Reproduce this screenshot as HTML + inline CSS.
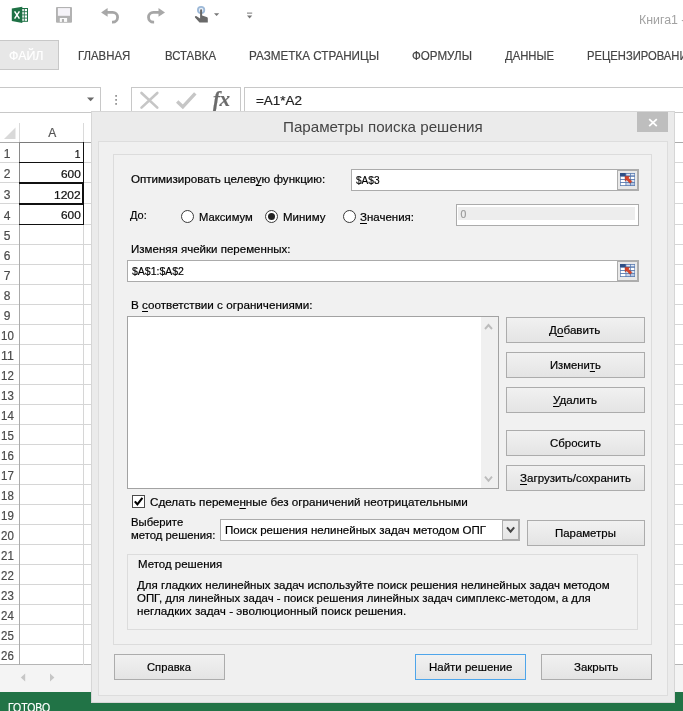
<!DOCTYPE html>
<html lang="ru"><head><meta charset="utf-8"><title>Параметры поиска решения</title>
<style>
html,body{margin:0;padding:0;}
body{width:683px;height:711px;overflow:hidden;position:relative;background:#fff;font-family:"Liberation Sans",sans-serif;}
.t{-webkit-text-stroke:0.2px currentColor;position:absolute;transform-origin:0 0;white-space:nowrap;line-height:1.149;font-family:"Liberation Sans",sans-serif;}
.t u{text-decoration:underline;text-underline-offset:1.5px;}
.a{position:absolute;box-sizing:border-box;}
.btn{position:absolute;box-sizing:border-box;border:1px solid #acacac;background:linear-gradient(#f0f0f0,#e5e5e5);}
.inp{position:absolute;box-sizing:border-box;border:1px solid #ababab;background:#fff;}
.radio{position:absolute;box-sizing:border-box;width:13px;height:13px;border:1px solid #333;border-radius:50%;background:#fff;}
#txt{position:absolute;left:0;top:0;width:683px;height:711px;will-change:transform;}

</style></head><body>
<!-- title bar / quick access toolbar -->
<svg class="a" style="left:0;top:0" width="683" height="40" viewBox="0 0 683 40">
<!-- excel logo -->
<rect x="21" y="8.5" width="6.5" height="12.8" fill="#fff" stroke="#1e7145" stroke-width="1"/>
<path d="M21 11.7h6.5M21 14.9h6.5M21 18.1h6.5M24.3 8.5v12.8" stroke="#1e7145" stroke-width="0.9" fill="none"/>
<path d="M11.8 8.6 L22.3 6.8 V22.9 L11.8 21.1 Z" fill="#1e7145"/>
<path d="M14.6 11.4 L19.4 18.6 M19.4 11.4 L14.6 18.6" stroke="#fff" stroke-width="1.5" fill="none"/>
<!-- save -->
<path d="M56 8 a1 1 0 0 1 1-1 H71 a1 1 0 0 1 1 1 V21.8 a1 1 0 0 1-1 1 H57 a1 1 0 0 1-1-1 Z" fill="#b2b2b2"/>
<rect x="57.9" y="8.1" width="12.1" height="7.7" fill="#f5f3f8"/>
<rect x="59.8" y="18" width="7.3" height="3.9" fill="#fafafa"/>
<rect x="61.9" y="19" width="2.1" height="3" fill="#b2b2b2"/>
<!-- undo -->
<path d="M101.1 12.4 L107.6 8 V16.8 Z" fill="#a8a8a8"/>
<path d="M106 12.4 H112.7 A4.9 4.9 0 0 1 112.7 22.2 H112" stroke="#a6a6a6" stroke-width="2.8" fill="none"/>
<!-- redo -->
<path d="M165 12.4 L158.5 8 V16.8 Z" fill="#a8a8a8"/>
<path d="M160 12.4 H153.4 A4.9 4.9 0 0 0 153.4 22.2 H154.1" stroke="#a6a6a6" stroke-width="2.8" fill="none"/>
<!-- touch mode -->
<circle cx="201.1" cy="10" r="3.2" fill="#e6eef7" stroke="#9db9d8" stroke-width="1.8"/>
<path d="M200.1 10.2 a1 1 0 0 1 2 0 V15.6 L206.6 17 a1.4 1.4 0 0 1 1.2 1.5 V22.6 H199.5 L195 17.6 a1.1 1.1 0 0 1 1.6-1.4 L200.1 18.4 Z" fill="#696969"/>
<path d="M214 13.3 h5.2 l-2.6 2.7 Z" fill="#777"/>
<!-- customize -->
<rect x="247" y="12.6" width="5.2" height="1" fill="#777"/>
<path d="M247 15.5 h5.2 l-2.6 3 Z" fill="#777"/>
</svg>
<!-- ribbon tabs -->
<div class="a" style="left:0px;top:40px;width:59px;height:30px;background:#e7e7e7;border:1px solid #c8c8c8;border-left:0"></div>
<!-- formula bar -->
<div class="a" style="left:0px;top:87px;width:101px;height:1px;background:#c8c8c8"></div>
<div class="a" style="left:131px;top:87px;width:110px;height:1px;background:#c8c8c8"></div>
<div class="a" style="left:244px;top:87px;width:439px;height:1px;background:#c8c8c8"></div>
<div class="a" style="left:0px;top:112px;width:92px;height:1px;background:#c8c8c8"></div>
<div class="a" style="left:675px;top:112px;width:8px;height:1px;background:#c8c8c8"></div>
<div class="a" style="left:100px;top:87px;width:1px;height:25px;background:#c8c8c8"></div>
<div class="a" style="left:131px;top:87px;width:1px;height:25px;background:#c8c8c8"></div>
<div class="a" style="left:240px;top:87px;width:1px;height:25px;background:#c8c8c8"></div>
<div class="a" style="left:244px;top:87px;width:1px;height:25px;background:#c8c8c8"></div>
<svg class="a" style="left:80px;top:88px" width="170" height="24" viewBox="80 88 170 24">
<path d="M87 97.5 h7.2 l-3.6 3.8 Z" fill="#6a6a6a"/>
<rect x="115.3" y="95" width="1.6" height="1.8" fill="#8c8c8c"/><rect x="115.3" y="99" width="1.6" height="1.8" fill="#8c8c8c"/><rect x="115.3" y="103" width="1.6" height="1.8" fill="#8c8c8c"/>
<path d="M141.5 93 L157.3 107.6 M157.3 93 L141.5 107.6" stroke="#c6c6c6" stroke-width="2.6" stroke-linecap="round" fill="none"/>
<path d="M177.2 101.5 L182.8 106.8 L195.3 93.4" stroke="#c6c6c6" stroke-width="3.4" fill="none"/>
</svg>
<span class="t" style="left:213px;top:87px;font-family:'Liberation Serif',serif;font-style:italic;font-weight:bold;font-size:21px;color:#6b6b6b;letter-spacing:-0.5px;will-change:transform">fx</span>
<!-- sheet -->
<div class="a" style="left:0px;top:113px;width:683px;height:29px;background:#fff"></div>
<svg class="a" style="left:0;top:113px" width="92" height="30" viewBox="0 113 92 30"><path d="M15.5 127.5 V139 H4 Z" fill="#d9d9d9"/></svg>
<div class="a" style="left:19px;top:122.5px;width:1px;height:19.5px;background:#dadada"></div>
<div class="a" style="left:83px;top:122.5px;width:1px;height:19.5px;background:#dadada"></div>
<div class="a" style="left:0px;top:142px;width:683px;height:1px;background:#ababab"></div>
<div class="a" style="left:0px;top:162px;width:683px;height:1px;background:#d6d6d6"></div>
<div class="a" style="left:0px;top:182px;width:683px;height:1px;background:#d6d6d6"></div>
<div class="a" style="left:0px;top:203px;width:683px;height:1px;background:#d6d6d6"></div>
<div class="a" style="left:0px;top:224px;width:683px;height:1px;background:#d6d6d6"></div>
<div class="a" style="left:0px;top:244px;width:683px;height:1px;background:#d6d6d6"></div>
<div class="a" style="left:0px;top:264px;width:683px;height:1px;background:#d6d6d6"></div>
<div class="a" style="left:0px;top:284px;width:683px;height:1px;background:#d6d6d6"></div>
<div class="a" style="left:0px;top:304px;width:683px;height:1px;background:#d6d6d6"></div>
<div class="a" style="left:0px;top:324px;width:683px;height:1px;background:#d6d6d6"></div>
<div class="a" style="left:0px;top:344px;width:683px;height:1px;background:#d6d6d6"></div>
<div class="a" style="left:0px;top:364px;width:683px;height:1px;background:#d6d6d6"></div>
<div class="a" style="left:0px;top:384px;width:683px;height:1px;background:#d6d6d6"></div>
<div class="a" style="left:0px;top:404px;width:683px;height:1px;background:#d6d6d6"></div>
<div class="a" style="left:0px;top:424px;width:683px;height:1px;background:#d6d6d6"></div>
<div class="a" style="left:0px;top:444px;width:683px;height:1px;background:#d6d6d6"></div>
<div class="a" style="left:0px;top:464px;width:683px;height:1px;background:#d6d6d6"></div>
<div class="a" style="left:0px;top:484px;width:683px;height:1px;background:#d6d6d6"></div>
<div class="a" style="left:0px;top:504px;width:683px;height:1px;background:#d6d6d6"></div>
<div class="a" style="left:0px;top:524px;width:683px;height:1px;background:#d6d6d6"></div>
<div class="a" style="left:0px;top:544px;width:683px;height:1px;background:#d6d6d6"></div>
<div class="a" style="left:0px;top:564px;width:683px;height:1px;background:#d6d6d6"></div>
<div class="a" style="left:0px;top:584px;width:683px;height:1px;background:#d6d6d6"></div>
<div class="a" style="left:0px;top:604px;width:683px;height:1px;background:#d6d6d6"></div>
<div class="a" style="left:0px;top:624px;width:683px;height:1px;background:#d6d6d6"></div>
<div class="a" style="left:0px;top:644px;width:683px;height:1px;background:#d6d6d6"></div>
<div class="a" style="left:0px;top:664px;width:683px;height:1px;background:#b5b5b5"></div>
<div class="a" style="left:19px;top:142px;width:1px;height:523px;background:#ababab"></div>
<div class="a" style="left:83px;top:142px;width:1px;height:523px;background:#d6d6d6"></div>
<div class="a" style="left:19px;top:142px;width:65px;height:1px;background:#7a7a7a"></div>
<div class="a" style="left:19px;top:142px;width:1px;height:82px;background:#8a8a8a"></div>
<div class="a" style="left:83px;top:142px;width:1.4px;height:82px;background:#111"></div>
<div class="a" style="left:19px;top:162px;width:65px;height:1px;background:#111"></div>
<div class="a" style="left:19px;top:224px;width:65px;height:1px;background:#111"></div>
<div class="a" style="left:19px;top:182px;width:65px;height:2px;background:#111"></div>
<div class="a" style="left:19px;top:203px;width:65px;height:2px;background:#111"></div>
<div class="a" style="left:82.2px;top:182px;width:2.2px;height:23px;background:#111"></div>
<div class="a" style="left:0px;top:665px;width:683px;height:27px;background:#f4f4f4"></div>
<svg class="a" style="left:0;top:665px" width="92" height="27" viewBox="0 665 92 27"><path d="M25.2 673.6 V681.4 L20.8 677.5 Z" fill="#c6c6c6"/><path d="M50 673.6 V681.4 L54.4 677.5 Z" fill="#c6c6c6"/></svg>
<!-- status bar -->
<div class="a" style="left:0px;top:692px;width:683px;height:19px;background:#217346"></div>
<!-- dialog -->
<div class="a" style="left:91px;top:111px;width:584px;height:592px;background:#ebebeb;border:1px solid #d6d6d6"></div>
<div class="a" style="left:98px;top:141px;width:570px;height:555px;background:#f0f0f0;border:1px solid #dddddd"></div>
<div class="a" style="left:637px;top:112px;width:31px;height:20px;background:#bebebe"></div>
<svg class="a" style="left:637px;top:112px" width="31" height="20" viewBox="0 0 31 20"><path d="M12.2 7.1 L19.8 14.1 M19.8 7.1 L12.2 14.1" stroke="#fff" stroke-width="1.8" fill="none"/></svg>
<div class="a" style="left:113px;top:154px;width:539px;height:491px;border:1px solid #dcdcdc;background:#f1f1f1"></div>
<!-- inputs -->
<div class="a" style="left:351px;top:169px;width:288px;height:22px;border:1px solid #ababab;background:#fff"></div>
<div class="a" style="left:617px;top:169px;width:22px;height:22px;border:2px solid #adadad;border-left-width:1px;background:#e9e9e9"></div>
<svg class="a" style="left:620px;top:173px" width="15" height="13" viewBox="0 0 15 13">
<rect x="0" y="0" width="15" height="13" fill="#5a7bb0"/>
<rect x="0" y="0" width="5.5" height="3" fill="#2f4f86"/>
<rect x="6.3" y="0.8" width="3.7" height="1.6" fill="#dfe8f5"/><rect x="10.8" y="0.8" width="3.6" height="1.6" fill="#dfe8f5"/>
<rect x="0.7" y="3.8" width="4.8" height="2.2" fill="#fff"/><rect x="6.3" y="3.8" width="3.7" height="2.2" fill="#fff"/><rect x="10.8" y="3.8" width="3.6" height="2.2" fill="#fff"/>
<rect x="0.7" y="6.9" width="4.8" height="2.2" fill="#fff"/><rect x="6.3" y="6.9" width="3.7" height="2.2" fill="#eef3fa"/><rect x="10.8" y="6.9" width="3.6" height="2.2" fill="#dce6f4"/>
<rect x="0.7" y="10" width="4.8" height="2.2" fill="#fff"/><rect x="6.3" y="10" width="3.7" height="2.2" fill="#c8d6ec"/><rect x="10.8" y="10" width="3.6" height="2.2" fill="#b4c7e4"/>
<path d="M5 3.2 L9.6 3.6 L8.4 4.9 L11.9 8.4 L10 10.3 L6.6 6.8 L5.3 8 Z" fill="#d8432a" stroke="#a52a14" stroke-width="0.5"/>
</svg>
<div class="a" style="left:456px;top:204px;width:183px;height:22px;border:1px solid #ababab;background:#fff"></div>
<div class="a" style="left:458px;top:207px;width:177px;height:12.5px;background:#ededed"></div>
<div class="a" style="left:127px;top:260px;width:512px;height:22px;border:1px solid #ababab;background:#fff"></div>
<div class="a" style="left:617px;top:260px;width:22px;height:22px;border:2px solid #adadad;border-left-width:1px;background:#e9e9e9"></div>
<svg class="a" style="left:620px;top:264px" width="15" height="13" viewBox="0 0 15 13">
<rect x="0" y="0" width="15" height="13" fill="#5a7bb0"/>
<rect x="0" y="0" width="5.5" height="3" fill="#2f4f86"/>
<rect x="6.3" y="0.8" width="3.7" height="1.6" fill="#dfe8f5"/><rect x="10.8" y="0.8" width="3.6" height="1.6" fill="#dfe8f5"/>
<rect x="0.7" y="3.8" width="4.8" height="2.2" fill="#fff"/><rect x="6.3" y="3.8" width="3.7" height="2.2" fill="#fff"/><rect x="10.8" y="3.8" width="3.6" height="2.2" fill="#fff"/>
<rect x="0.7" y="6.9" width="4.8" height="2.2" fill="#fff"/><rect x="6.3" y="6.9" width="3.7" height="2.2" fill="#eef3fa"/><rect x="10.8" y="6.9" width="3.6" height="2.2" fill="#dce6f4"/>
<rect x="0.7" y="10" width="4.8" height="2.2" fill="#fff"/><rect x="6.3" y="10" width="3.7" height="2.2" fill="#c8d6ec"/><rect x="10.8" y="10" width="3.6" height="2.2" fill="#b4c7e4"/>
<path d="M5 3.2 L9.6 3.6 L8.4 4.9 L11.9 8.4 L10 10.3 L6.6 6.8 L5.3 8 Z" fill="#d8432a" stroke="#a52a14" stroke-width="0.5"/>
</svg>
<div class="a" style="left:127px;top:316px;width:372px;height:173px;border:1px solid #a2a2a2;background:#fff"></div>
<div class="a" style="left:481px;top:317px;width:17px;height:171px;background:#f0f0f0"></div>
<svg class="a" style="left:481px;top:317px" width="17" height="171" viewBox="0 0 17 171"><path d="M4 12 L7.5 8 L11 12" stroke="#bcbcbc" stroke-width="1.9" fill="none"/><path d="M4 159.6 L7.5 163.8 L11 159.6" stroke="#bcbcbc" stroke-width="1.9" fill="none"/></svg>
<!-- radios -->
<div class="a" style="left:180.8px;top:210px;width:13px;height:13px;border:1px solid #3a3a3a;border-radius:50%;background:#fff"></div>
<div class="a" style="left:265px;top:210px;width:13px;height:13px;border:1px solid #3a3a3a;border-radius:50%;background:#fff"></div>
<div class="a" style="left:342.8px;top:210px;width:13px;height:13px;border:1px solid #3a3a3a;border-radius:50%;background:#fff"></div>
<div class="a" style="left:268px;top:213px;width:7px;height:7px;border-radius:50%;background:#222"></div>
<!-- buttons -->
<div class="a" style="left:506px;top:317px;width:139px;height:26px;border:1px solid #acacac;background:linear-gradient(#f1f1f1,#e4e4e4);"></div>
<div class="a" style="left:506px;top:352px;width:139px;height:26px;border:1px solid #acacac;background:linear-gradient(#f1f1f1,#e4e4e4);"></div>
<div class="a" style="left:506px;top:387px;width:139px;height:26px;border:1px solid #acacac;background:linear-gradient(#f1f1f1,#e4e4e4);"></div>
<div class="a" style="left:506px;top:430px;width:139px;height:26px;border:1px solid #acacac;background:linear-gradient(#f1f1f1,#e4e4e4);"></div>
<div class="a" style="left:506px;top:465px;width:139px;height:26px;border:1px solid #acacac;background:linear-gradient(#f1f1f1,#e4e4e4);"></div>
<div class="a" style="left:527px;top:520px;width:118px;height:26px;border:1px solid #acacac;background:linear-gradient(#f1f1f1,#e4e4e4);"></div>
<div class="a" style="left:114px;top:654px;width:111px;height:26px;border:1px solid #acacac;background:linear-gradient(#f1f1f1,#e4e4e4);"></div>
<div class="a" style="left:415px;top:654px;width:111px;height:26px;border:1px solid #acacac;background:linear-gradient(#f1f1f1,#e4e4e4);border-color:#4ea5ea"></div>
<div class="a" style="left:541px;top:654px;width:111px;height:26px;border:1px solid #acacac;background:linear-gradient(#f1f1f1,#e4e4e4);"></div>
<!-- checkbox -->
<div class="a" style="left:132px;top:495px;width:13px;height:13px;border:1px solid #4a4a4a;background:#fff"></div>
<svg class="a" style="left:132px;top:495px" width="13" height="13" viewBox="0 0 13 13"><path d="M2.8 6.4 L5.4 9.3 L10.4 2.9" stroke="#000" stroke-width="2.1" fill="none"/></svg>
<!-- select -->
<div class="a" style="left:220px;top:519px;width:300px;height:22px;border:1px solid #ababab;background:#fff"></div>
<div class="a" style="left:502px;top:519px;width:18px;height:22px;border:2px solid #adadad;border-left-width:1px;background:linear-gradient(#eeeeee,#e6e6e6)"></div>
<svg class="a" style="left:502px;top:519px" width="18" height="22" viewBox="0 0 18 22"><path d="M5 8.3 L8.6 12.6 L12.2 8.3" stroke="#444" stroke-width="2" fill="none"/></svg>
<!-- group -->
<div class="a" style="left:127px;top:554px;width:511px;height:76px;border:1px solid #dcdcdc"></div>
<div id="txt">
<span class="t" style="left:9px;top:49.00px;font-size:12.5px;color:#fff;transform:scaleX(0.9924);">ФАЙЛ</span>
<span class="t" style="left:78.3px;top:49.00px;font-size:12.5px;color:#444;transform:scaleX(0.9103);">ГЛАВНАЯ</span>
<span class="t" style="left:164.7px;top:49.00px;font-size:12.5px;color:#444;transform:scaleX(0.9097);">ВСТАВКА</span>
<span class="t" style="left:249px;top:49.00px;font-size:12.5px;color:#444;transform:scaleX(0.9343);">РАЗМЕТКА СТРАНИЦЫ</span>
<span class="t" style="left:412px;top:49.00px;font-size:12.5px;color:#444;transform:scaleX(0.9282);">ФОРМУЛЫ</span>
<span class="t" style="left:505px;top:49.00px;font-size:12.5px;color:#444;transform:scaleX(0.9030);">ДАННЫЕ</span>
<span class="t" style="left:587px;top:49.00px;font-size:12.5px;color:#444;transform:scaleX(0.8984);">РЕЦЕНЗИРОВАНИЕ</span>
<span class="t" style="left:638.5px;top:13.00px;font-size:12.5px;color:#a2a2a2;transform:scaleX(0.9894);-webkit-text-stroke:0;">Книга1 -</span>
<span class="t" style="left:256px;top:94.00px;font-size:13px;color:#222;transform:scaleX(1.0348);">=A1*A2</span>
<span class="t" style="left:48.3px;top:127.00px;font-size:12px;color:#555;transform:scaleX(1.0000);">A</span>
<span class="t" style="left:3.8499999999999996px;top:148.00px;font-size:12px;color:#4a4a4a;transform:scaleX(1.0000);">1</span>
<span class="t" style="left:3.8499999999999996px;top:168.00px;font-size:12px;color:#4a4a4a;transform:scaleX(1.0000);">2</span>
<span class="t" style="left:3.8499999999999996px;top:189.00px;font-size:12px;color:#4a4a4a;transform:scaleX(1.0000);">3</span>
<span class="t" style="left:3.8499999999999996px;top:210.00px;font-size:12px;color:#4a4a4a;transform:scaleX(1.0000);">4</span>
<span class="t" style="left:3.8499999999999996px;top:230.00px;font-size:12px;color:#4a4a4a;transform:scaleX(1.0000);">5</span>
<span class="t" style="left:3.8499999999999996px;top:250.00px;font-size:12px;color:#4a4a4a;transform:scaleX(1.0000);">6</span>
<span class="t" style="left:3.8499999999999996px;top:270.00px;font-size:12px;color:#4a4a4a;transform:scaleX(1.0000);">7</span>
<span class="t" style="left:3.8499999999999996px;top:290.00px;font-size:12px;color:#4a4a4a;transform:scaleX(1.0000);">8</span>
<span class="t" style="left:3.8499999999999996px;top:310.00px;font-size:12px;color:#4a4a4a;transform:scaleX(1.0000);">9</span>
<span class="t" style="left:0.8999999999999995px;top:330.00px;font-size:12px;color:#4a4a4a;transform:scaleX(0.9581);">10</span>
<span class="t" style="left:0.8999999999999995px;top:350.00px;font-size:12px;color:#4a4a4a;transform:scaleX(1.0266);">11</span>
<span class="t" style="left:0.8999999999999995px;top:370.00px;font-size:12px;color:#4a4a4a;transform:scaleX(0.9581);">12</span>
<span class="t" style="left:0.8999999999999995px;top:390.00px;font-size:12px;color:#4a4a4a;transform:scaleX(0.9581);">13</span>
<span class="t" style="left:0.8999999999999995px;top:410.00px;font-size:12px;color:#4a4a4a;transform:scaleX(0.9581);">14</span>
<span class="t" style="left:0.8999999999999995px;top:430.00px;font-size:12px;color:#4a4a4a;transform:scaleX(0.9581);">15</span>
<span class="t" style="left:0.8999999999999995px;top:450.00px;font-size:12px;color:#4a4a4a;transform:scaleX(0.9581);">16</span>
<span class="t" style="left:0.8999999999999995px;top:470.00px;font-size:12px;color:#4a4a4a;transform:scaleX(0.9581);">17</span>
<span class="t" style="left:0.8999999999999995px;top:490.00px;font-size:12px;color:#4a4a4a;transform:scaleX(0.9581);">18</span>
<span class="t" style="left:0.8999999999999995px;top:510.00px;font-size:12px;color:#4a4a4a;transform:scaleX(0.9581);">19</span>
<span class="t" style="left:0.8999999999999995px;top:530.00px;font-size:12px;color:#4a4a4a;transform:scaleX(0.9581);">20</span>
<span class="t" style="left:0.8999999999999995px;top:550.00px;font-size:12px;color:#4a4a4a;transform:scaleX(0.9581);">21</span>
<span class="t" style="left:0.8999999999999995px;top:570.00px;font-size:12px;color:#4a4a4a;transform:scaleX(0.9581);">22</span>
<span class="t" style="left:0.8999999999999995px;top:590.00px;font-size:12px;color:#4a4a4a;transform:scaleX(0.9581);">23</span>
<span class="t" style="left:0.8999999999999995px;top:610.00px;font-size:12px;color:#4a4a4a;transform:scaleX(0.9581);">24</span>
<span class="t" style="left:0.8999999999999995px;top:630.00px;font-size:12px;color:#4a4a4a;transform:scaleX(0.9581);">25</span>
<span class="t" style="left:0.8999999999999995px;top:650.00px;font-size:12px;color:#4a4a4a;transform:scaleX(0.9581);">26</span>
<span class="t" style="left:74.8px;top:149.00px;font-size:10.3px;color:#111;transform:scaleX(1.0000);">1</span>
<span class="t" style="left:60.6px;top:169.00px;font-size:10.3px;color:#111;transform:scaleX(1.1520);">600</span>
<span class="t" style="left:53.7px;top:190.00px;font-size:10.3px;color:#111;transform:scaleX(1.1648);">1202</span>
<span class="t" style="left:60.6px;top:210.00px;font-size:10.3px;color:#111;transform:scaleX(1.1520);">600</span>
<span class="t" style="left:7.9px;top:701.00px;font-size:12.5px;color:#fff;transform:scaleX(0.8381);">ГОТОВО</span>
<span class="t" style="left:283px;top:118.00px;font-size:15px;color:#444;transform:scaleX(1.0100);-webkit-text-stroke:0;">Параметры поиска решения</span>
<span class="t" style="left:130.5px;top:173.00px;font-size:11.5px;color:#000;transform:scaleX(1.0084);">Оптимизировать целев<u>у</u>ю функцию:</span>
<span class="t" style="left:355.8px;top:174.00px;font-size:11.5px;color:#000;transform:scaleX(0.8787);">$A$3</span>
<span class="t" style="left:130.3px;top:209.00px;font-size:11.5px;color:#000;transform:scaleX(0.9534);">До:</span>
<span class="t" style="left:198.8px;top:211.00px;font-size:11.5px;color:#000;transform:scaleX(0.9761);">Максимум</span>
<span class="t" style="left:282.9px;top:211.00px;font-size:11.5px;color:#000;transform:scaleX(0.9982);">Миниму</span>
<span class="t" style="left:360.3px;top:211.00px;font-size:11.5px;color:#000;transform:scaleX(0.9994);"><u>З</u>начения:</span>
<span class="t" style="left:460.5px;top:208.00px;font-size:10.5px;color:#9a9a9a;transform:scaleX(1.0000);">0</span>
<span class="t" style="left:130.5px;top:243.00px;font-size:11.5px;color:#000;transform:scaleX(1.0021);">Изменяя ячейки переменных:</span>
<span class="t" style="left:131.9px;top:265.00px;font-size:11.5px;color:#000;transform:scaleX(0.9118);">$A$1:$A$2</span>
<span class="t" style="left:130.5px;top:299.00px;font-size:11.5px;color:#000;transform:scaleX(1.0146);">В <u>с</u>оответствии с ограничениями:</span>
<span class="t" style="left:549.3px;top:324.00px;font-size:11.5px;color:#000;transform:scaleX(1.0109);">Д<u>о</u>бавить</span>
<span class="t" style="left:549.8px;top:359.00px;font-size:11.5px;color:#000;transform:scaleX(0.9806);">Измени<u>т</u>ь</span>
<span class="t" style="left:553px;top:394.00px;font-size:11.5px;color:#000;transform:scaleX(1.0018);"><u>У</u>далить</span>
<span class="t" style="left:550px;top:437.00px;font-size:11.5px;color:#000;transform:scaleX(0.9976);">Сбросить</span>
<span class="t" style="left:520px;top:472.00px;font-size:11.5px;color:#000;transform:scaleX(1.0051);"><u>З</u>агрузить/сохранить</span>
<span class="t" style="left:149.5px;top:496.00px;font-size:11.5px;color:#000;transform:scaleX(1.0151);">Сделать переме<u>н</u>ные без ограничений неотрицательными</span>
<span class="t" style="left:130.5px;top:516.00px;font-size:11.5px;color:#000;transform:scaleX(0.9820);">Выберите</span>
<span class="t" style="left:130.5px;top:529.00px;font-size:11.5px;color:#000;transform:scaleX(0.9846);">метод решения:</span>
<span class="t" style="left:224.6px;top:524.00px;font-size:11.5px;color:#000;transform:scaleX(1.0024);">Поиск решения нелинейных задач методом ОПГ</span>
<span class="t" style="left:555.3px;top:527.00px;font-size:11.5px;color:#000;transform:scaleX(0.9933);">Параметры</span>
<span class="t" style="left:137.5px;top:558.00px;font-size:11.5px;color:#000;transform:scaleX(0.9973);">Метод решения</span>
<span class="t" style="left:137.4px;top:579.00px;font-size:11.5px;color:#000;transform:scaleX(1.0032);">Для гладких нелинейных задач используйте поиск решения нелинейных задач методом</span>
<span class="t" style="left:137.4px;top:592.00px;font-size:11.5px;color:#000;transform:scaleX(0.9928);">ОПГ, для линейных задач - поиск решения линейных задач симплекс-методом, а для</span>
<span class="t" style="left:137.4px;top:605.00px;font-size:11.5px;color:#000;transform:scaleX(1.0174);">негладких задач - эволюционный поиск решения.</span>
<span class="t" style="left:147px;top:661.00px;font-size:11.5px;color:#000;transform:scaleX(0.9751);">Справка</span>
<span class="t" style="left:428.5px;top:661.00px;font-size:11.5px;color:#000;transform:scaleX(0.9975);">Найти решение</span>
<span class="t" style="left:573.9px;top:661.00px;font-size:11.5px;color:#000;transform:scaleX(1.0001);">Закрыть</span>
</div>
</body></html>
